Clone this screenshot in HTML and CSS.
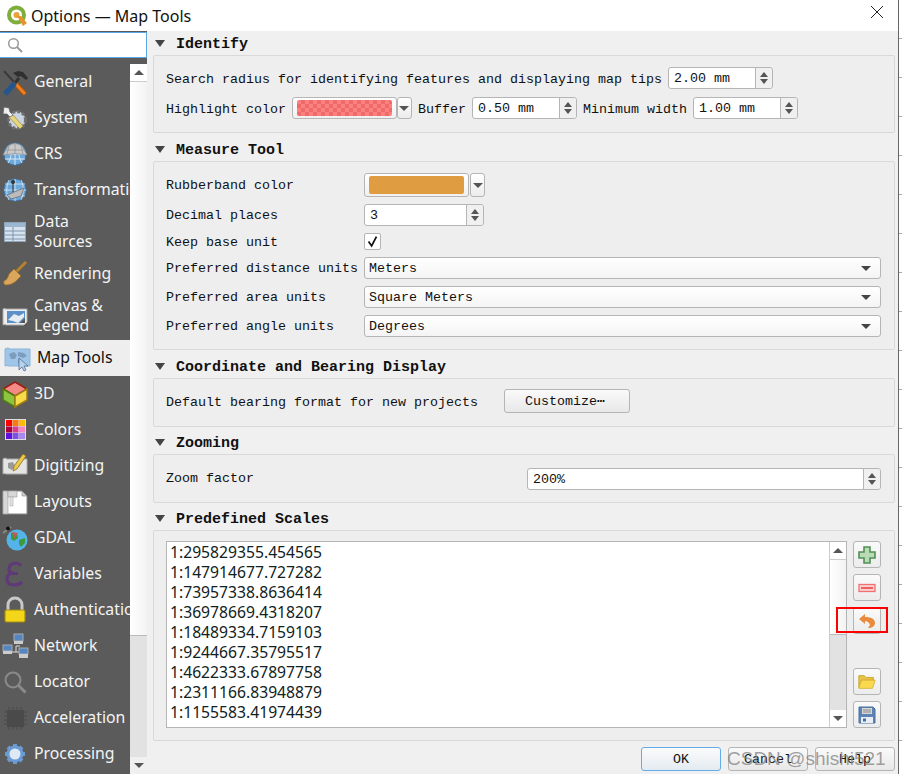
FILE: index.html
```html
<!DOCTYPE html>
<html lang="en">
<head>
<meta charset="utf-8">
<title>Options — Map Tools</title>
<link rel="stylesheet" href="styles.css">
</head>
<body>
<div class="window">
  <header class="titlebar">
    <svg class="logo" viewBox="0 0 22 22"><circle cx="10.500" cy="10" r="7.500" fill="none" stroke="#7fae3c" stroke-width="4"/><circle cx="10.500" cy="10" r="3" fill="#e9a23b"/><path d="M11 11l4 0 6 7-4 3z" fill="#e8932d"/></svg>
    <span class="title">Options — Map Tools</span>
    <svg class="close" viewBox="0 0 14 14"><path d="M1 1l12 12M13 1L1 13" stroke="#222" stroke-width="1" fill="none"/></svg>
  </header>
  <div class="content">
    <aside class="nav">
      <div class="search">
        <svg class="search-icon" viewBox="0 0 16 16"><circle cx="6.500" cy="6.500" r="4.800" fill="none" stroke="#999" stroke-width="1.500"/><path d="M10 10l5 5" stroke="#999" stroke-width="2"/></svg>
      </div>
      <div class="nav-pane">
        <ul class="nav-list">
          <li class="nav-item"><svg class="ico" viewBox="0 0 28 28"><path d="M3 3l10 11" stroke="#3a3a3a" stroke-width="2"/><path d="M13 14l11 12" stroke="#a94f0c" stroke-width="5"/><path d="M13 14l11 12" stroke="#ef7f1f" stroke-width="3"/><path d="M4 26l10-11" stroke="#23558f" stroke-width="5"/><path d="M14 15l4-5" stroke="#333" stroke-width="3"/><path d="M12 5l5-2 5 1 5 6-2 2-5-4-3 1z" fill="#2f2f2f"/></svg><span>General</span></li>
          <li class="nav-item"><svg class="ico" viewBox="0 0 28 28"><circle cx="16" cy="16" r="8.500" fill="#c8d4e0" stroke="#6e6e6e" stroke-width="3" stroke-dasharray="3 2"/><path d="M11 10l11 12-3 3L8 13z" fill="#e8d778" stroke="#8a7a30" stroke-width=".6"/><path d="M3 3l5 1 1 4 3 3-3 2-3-3-4 0z" fill="#eee" stroke="#666" stroke-width=".8"/></svg><span>System</span></li>
          <li class="nav-item"><svg class="ico" viewBox="0 0 28 28"><circle cx="14" cy="14" r="11" fill="#6ea9dc" stroke="#3e78ae"/><path d="M3 14h22M14 3v22M7 6c4 5 4 11 0 17M21 6c-4 5-4 11 0 17M4 19h20" stroke="#d7e8f6" stroke-width="1" fill="none"/><path d="M2 15L7 6q7-5 14 0l5 9q-12-3-24 0z" fill="#c9c9c9" stroke="#8d8d8d" stroke-width=".7"/><path d="M8 6l-2 8M14 4v9M20 6l2 8M5 10h18" stroke="#8d8d8d" stroke-width=".7"/></svg><span>CRS</span></li>
          <li class="nav-item"><svg class="ico" viewBox="0 0 28 28"><circle cx="14" cy="14" r="11" fill="#6ea9dc" stroke="#3e78ae"/><path d="M3 14h22M14 3v22M4 8h20M4 20h20M8 4c-3 6-3 14 0 20M20 4c3 6 3 14 0 20" stroke="#d7e8f6" stroke-width=".8" fill="none"/><path d="M6 19l17-7-3 8-10 3z" fill="#bbb" stroke="#555" stroke-width=".6"/><circle cx="12" cy="6" r="2" fill="#333"/><path d="M12 6v10" stroke="#333" stroke-width="1"/></svg><span>Transformations</span></li>
          <li class="nav-item tall"><svg class="ico" viewBox="0 0 28 28"><rect x="3.500" y="4.500" width="21" height="19" fill="#d6e2ee" stroke="#8fa5bb"/><rect x="4" y="5" width="20" height="4" fill="#9bb6d0"/><path d="M4 13h20M4 17h20M4 21h20M12 9v14" stroke="#7e96ae"/></svg><span>Data<br>Sources</span></li>
          <li class="nav-item"><svg class="ico" viewBox="0 0 28 28"><path d="M25 2L15 12" stroke="#b5812f" stroke-width="3"/><path d="M13 9l7 7-3 3c-4 5-9 6-13 6-1-1-2-3-1-4 3-1 4-4 5-7z" fill="#d9a65b" stroke="#9b6e2a" stroke-width=".8"/></svg><span>Rendering</span></li>
          <li class="nav-item tall"><svg class="ico" viewBox="0 0 28 28"><path d="M2 7q2-1 3 0h21v13l-3 3H5q-1-1-3 0z" fill="#eee" stroke="#aaa"/><rect x="6" y="9" width="18" height="12" fill="#5e90c8"/><path d="M7 18l6-6 5 2 5-3v4l-6 6-5-2z" fill="#e8edf2"/><path d="M19 21l5-5v5z" fill="#555"/></svg><span>Canvas &amp;<br>Legend</span></li>
          <li class="nav-item active"><svg class="ico" viewBox="0 0 28 28"><path d="M2 5q3-2 5 0h20v17H6q-2-1-4 0z" fill="#9fc6e8" stroke="#8ab4d8"/><path d="M6 10l5-2 3 3-2 4-4 0zM15 8l6 1 3 3-4 2-5-2zM15 15l4 1-1 4-3-1z" fill="#7c9dbc"/><path d="M16 14v12l3-3 2 4 2-1-2-4 4 0z" fill="#b9d3ea" stroke="#4e6f92" stroke-width=".8"/></svg><span>Map Tools</span></li>
          <li class="nav-item"><svg class="ico" viewBox="0 0 28 28"><path d="M14 2l12 7-12 7L2 9z" fill="#f58a84" stroke="#9c1c12" stroke-width="1.500"/><path d="M2 9l12 7v11L2 20z" fill="#8cc63e" stroke="#4f7a13" stroke-width="1.500"/><path d="M26 9l-12 7v11l12-7z" fill="#f8dc4c" stroke="#a17c0e" stroke-width="1.500"/></svg><span>3D</span></li>
          <li class="nav-item"><svg class="ico" viewBox="0 0 28 28"><rect x="4" y="3" width="21" height="21" fill="#ddd"/><path d="M5 4h6v6H5z" fill="#f00"/><path d="M11.500 4h6v6h-6z" fill="#f87a10"/><path d="M18 4h6v6h-6z" fill="#fbbc05"/><path d="M5 10.500h6v6H5z" fill="#a8003c"/><path d="M11.500 10.500h6v6h-6z" fill="#d93c8c"/><path d="M18 10.500h6v6h-6z" fill="#f584c4"/><path d="M5 17h6v6H5z" fill="#5f10e0"/><path d="M11.500 17h6v6h-6z" fill="#7d50e8"/><path d="M18 17h6v6h-6z" fill="#ab88f0"/></svg><span>Colors</span></li>
          <li class="nav-item"><svg class="ico" viewBox="0 0 28 28"><path d="M2 7q2-2 4 0h20v15H5q-2-1-3 0z" fill="#e4e4e4" stroke="#aaa"/><path d="M7 11l5-1 2 4-3 4-4-2zM15 10l4 1-1 4-3 0z" fill="#9a9a9a"/><path d="M22 2l3 2-9 13-4 2 1-5z" fill="#ecc94b" stroke="#8a7026" stroke-width=".8"/></svg><span>Digitizing</span></li>
          <li class="nav-item"><svg class="ico" viewBox="0 0 28 28"><path d="M2 3h19l5 5v18H2z" fill="#fff" stroke="#888"/><path d="M2 3h5v23H2z" fill="#d8d8d8" stroke="#999" stroke-width=".6"/><path d="M7 3h9v6H7z" fill="#d8d8d8" stroke="#999" stroke-width=".6"/><path d="M21 3v5h5z" fill="#ccc" stroke="#888" stroke-width=".6"/><path d="M9 9v9h3v-9z" fill="#e4e4e4" stroke="#aaa" stroke-width=".6"/></svg><span>Layouts</span></li>
          <li class="nav-item"><svg class="ico" viewBox="0 0 28 28"><circle cx="16" cy="16" r="10.500" fill="#54b4ea"/><path d="M10 9l6 0 1 5-4 3-3-2zM18 16l6-2 0 5-4 4-2-3z" fill="#3c9a3c"/><path d="M11 8l2 7 4-6z" fill="#c05a5a"/><path d="M2 9L10 3" stroke="#8a8a8a" stroke-width="2"/><circle cx="7" cy="4.500" r="2" fill="#111"/></svg><span>GDAL</span></li>
          <li class="nav-item"><svg class="ico" viewBox="0 0 28 28"><path d="M20 6q-2-3-6-3-6 1-6 6 0 3 3 4-5 1-5 6 0 6 7 6 5 0 8-3M11 13.500h6" fill="none" stroke="#5e3a78" stroke-width="3.200"/></svg><span>Variables</span></li>
          <li class="nav-item"><svg class="ico" viewBox="0 0 28 28"><path d="M7 14V9a7 7 0 0 1 14 0v5" fill="none" stroke="#c8c8c8" stroke-width="3"/><rect x="4" y="14" width="20" height="12" rx="1.500" fill="#f3d61a" stroke="#a58c12" stroke-width="1.200"/></svg><span>Authentication</span></li>
          <li class="nav-item"><svg class="ico" viewBox="0 0 28 28"><path d="M8 20h7M15 20v-6h4M15 20h4" stroke="#ddd" fill="none"/><rect x="13" y="2" width="9" height="7" fill="#5586c0" stroke="#aaa"/><rect x="13" y="9" width="9" height="3" fill="#ccc"/><rect x="2" y="13" width="9" height="6" fill="#5586c0" stroke="#aaa"/><rect x="2" y="19" width="9" height="3" fill="#ccc"/><rect x="18" y="16" width="9" height="6" fill="#5586c0" stroke="#aaa"/><rect x="18" y="22" width="9" height="4" fill="#ccc"/></svg><span>Network</span></li>
          <li class="nav-item"><svg class="ico" viewBox="0 0 28 28"><circle cx="12" cy="12" r="7.500" fill="none" stroke="#8a8a8a" stroke-width="2"/><path d="M17.500 17.500l7 7" stroke="#8a8a8a" stroke-width="3"/></svg><span>Locator</span></li>
          <li class="nav-item"><svg class="ico" viewBox="0 0 28 28"><rect x="6" y="6" width="17" height="17" fill="#4a4a4a"/><path d="M8 3v23M12 3v23M16 3v23M20 3v23M3 8h23M3 12h23M3 16h23M3 20h23" stroke="#4a4a4a" stroke-dasharray="3 17"/></svg><span>Acceleration</span></li>
          <li class="nav-item"><svg class="ico" viewBox="0 0 28 28"><path d="M14 4v20M4 14h20M7 7l14 14M21 7L7 21" stroke="#6b9bd4" stroke-width="4"/><circle cx="14" cy="14" r="7" fill="#dfe9f5" stroke="#6b9bd4" stroke-width="3"/></svg><span>Processing</span></li>
        </ul>
        <div class="scrollbar side">
          <div class="sb-btn"><i class="tri up"></i></div>
          <div class="sb-thumb"></div>
          <div class="sb-btn"><i class="tri down"></i></div>
        </div>
      </div>
    </aside>
    <main class="main">
      <section class="group first">
        <h2 class="group-head"><i class="tri down big"></i><span>Identify</span></h2>
        <div class="box rows">
          <div class="row">
            <span class="lbl">Search radius for identifying features and displaying map tips</span>
            <div class="spin"><span>2.00 mm</span><b class="arrows"><i class="tri up"></i><i class="tri down"></i></b></div>
          </div>
          <div class="row">
            <span class="lbl">Highlight color</span>
            <div class="colorbtn"><span class="swatch checker"></span></div><div class="colordrop"><i class="tri down"></i></div>
            <span class="lbl">Buffer</span>
            <div class="spin"><span>0.50 mm</span><b class="arrows"><i class="tri up"></i><i class="tri down"></i></b></div>
            <span class="lbl">Minimum width</span>
            <div class="spin"><span>1.00 mm</span><b class="arrows"><i class="tri up"></i><i class="tri down"></i></b></div>
          </div>
        </div>
      </section>
      <section class="group">
        <h2 class="group-head"><i class="tri down big"></i><span>Measure Tool</span></h2>
        <div class="box form">
          <span class="lbl">Rubberband color</span>
          <div class="row tight"><div class="colorbtn"><span class="swatch orange"></span></div><div class="colordrop"><i class="tri down"></i></div></div>
          <span class="lbl">Decimal places</span>
          <div class="spin wide"><span>3</span><b class="arrows"><i class="tri up"></i><i class="tri down"></i></b></div>
          <span class="lbl low">Keep base unit</span>
          <div class="check"><svg viewBox="0 0 17 17"><path d="M4 8.500l3.500 5L13 3" fill="none" stroke="#111" stroke-width="2"/></svg></div>
          <span class="lbl">Preferred distance units</span>
          <div class="combo"><span>Meters</span><i class="tri down"></i></div>
          <span class="lbl">Preferred area units</span>
          <div class="combo"><span>Square Meters</span><i class="tri down"></i></div>
          <span class="lbl">Preferred angle units</span>
          <div class="combo"><span>Degrees</span><i class="tri down"></i></div>
        </div>
      </section>
      <section class="group">
        <h2 class="group-head"><i class="tri down big"></i><span>Coordinate and Bearing Display</span></h2>
        <div class="box line coord">
          <span class="lbl">Default bearing format for new projects</span>
          <button class="btn custom">Customize⋯</button>
        </div>
      </section>
      <section class="group next">
        <h2 class="group-head"><i class="tri down big"></i><span>Zooming</span></h2>
        <div class="box line zoom">
          <span class="lbl">Zoom factor</span>
          <div class="spin zoomspin"><span>200%</span><b class="arrows"><i class="tri up"></i><i class="tri down"></i></b></div>
        </div>
      </section>
      <section class="group next">
        <h2 class="group-head"><i class="tri down big"></i><span>Predefined Scales</span></h2>
        <div class="box scales">
          <div class="listbox">
            <ul class="scale-list">
              <li>1:295829355.454565</li>
              <li>1:147914677.727282</li>
              <li>1:73957338.8636414</li>
              <li>1:36978669.4318207</li>
              <li>1:18489334.7159103</li>
              <li>1:9244667.35795517</li>
              <li>1:4622333.67897758</li>
              <li>1:2311166.83948879</li>
              <li>1:1155583.41974439</li>
            </ul>
            <div class="scrollbar list">
              <div class="sb-btn"><i class="tri up"></i></div>
              <div class="sb-thumb"></div>
              <div class="sb-btn"><i class="tri down"></i></div>
            </div>
          </div>
          <div class="tools">
            <button class="tool"><svg viewBox="0 0 20 20"><path d="M7 2h6v5h5v6h-5v5H7v-5H2V7h5z" fill="#b9dcb4" stroke="#4f8f56" stroke-width="1.600"/></svg></button>
            <button class="tool"><svg viewBox="0 0 20 20"><rect x="2" y="6.500" width="16" height="7" fill="#fbd0d0" stroke="#ee7070" stroke-width="1.300"/><rect x="4" y="9" width="12" height="2" fill="#ee6060"/></svg></button>
            <button class="tool"><svg viewBox="0 0 20 20"><path d="M2 8l6-5v3c6 0 10 2 10 6 0 3-3 5-7 5l2-3c-1-3-3-4-5-4v3z" fill="#e98a3c"/></svg></button>
            <span class="tool-gap"></span>
            <button class="tool"><svg viewBox="0 0 22 20"><path d="M2 3h6l2 2h8v3H5L2 16z" fill="#e8c445" stroke="#c7a52c"/><path d="M5 8h15l-3 9H2z" fill="#fbd94e" stroke="#d8b53a"/></svg></button>
            <button class="tool"><svg viewBox="0 0 20 20"><path d="M2 2h14l2 2v14H2z" fill="#5b83b5" stroke="#48709f"/><rect x="5" y="3" width="10" height="6" fill="#d8d8d8"/><path d="M6 5h8M6 7h8" stroke="#888"/><rect x="4" y="12" width="12" height="6" fill="#e9eef4"/><rect x="6" y="13.500" width="3" height="3" fill="#48709f"/></svg></button>
          </div>
        </div>
      </section>
      <footer class="actions">
        <button class="btn default">OK</button>
        <button class="btn">Cancel</button>
        <button class="btn">Help</button>
      </footer>
    </main>
  </div>
</div>
<div class="redmark"></div>
<div class="watermark">CSDN @shishi521</div>
</body>
</html>
```
FILE: styles.css
```css
* { box-sizing: border-box; }
html, body { margin: 0; padding: 0; height: 774px; overflow: hidden; }
body {
  position: relative;
  width: 902px;
  background: repeating-linear-gradient(#fff 0 38px, #a8a8a8 38px 39px);
  font-family: "Liberation Mono", monospace;
  font-size: 13.33px;
  color: #111;
}
.window { width: 899px; height: 774px; display: flex; flex-direction: column; background: #f0f0f0; border-right: 1px solid #666; }
.titlebar { height: 31px; flex: none; display: flex; align-items: center; background: #fff; padding-left: 6px; }
.logo { width: 22px; height: 22px; margin-right: 3px; }
.title { font: 16px "Noto Sans", sans-serif; color: #111; }
.close { width: 14px; height: 14px; margin-left: auto; margin-right: 14px; margin-top: -7px; }
.content { flex: 1; display: flex; min-height: 0; }
.nav { width: 147px; flex: none; display: flex; flex-direction: column; background: #5b5b5b; }
.search { height: 26px; margin-top: 1px; background: #fff; border: 1px solid #5aa9e6; border-left: 0; display: flex; align-items: center; padding-left: 7px; flex: none; }
.search-icon { width: 16px; height: 16px; }
.nav-pane { flex: 1; display: flex; min-height: 0; padding-top: 6px; }
.nav-list { list-style: none; margin: 0; padding: 0; width: 130px; flex: none; overflow: hidden; }
.nav-item { height: 36px; display: flex; align-items: center; padding-left: 1px; font: 15.8px/20px "Noto Sans", sans-serif; color: #f4f4f4; white-space: nowrap; }
.nav-item.tall { height: 48px; }
.nav-item span { margin-left: 5px; padding-bottom: 2px; }
.nav-item.active { background: #eeeeee; color: #111; padding-left: 3px; }
.nav-item.active span { margin-left: 6px; }
.ico { width: 28px; height: 28px; flex: none; }
.scrollbar { width: 17px; display: flex; flex-direction: column; background: #e2e2e2; }
.sb-btn { height: 17px; flex: none; display: flex; align-items: center; justify-content: center; background: #fff; }
.sb-thumb { background: linear-gradient(90deg, #fff, #f3f3f3); border-bottom: 1px solid #bbb; border-top: 1px solid #ccc; }
.side .sb-thumb { height: 555px; }
.side .sb-btn:last-child { margin-top: auto; background: #f0f0f0; }
.list .sb-thumb { height: 76px; }
.list .sb-btn:last-child { margin-top: auto; }
.tri { display: block; width: 0; height: 0; border-left: 5px solid transparent; border-right: 5px solid transparent; }
.tri.up { border-bottom: 5px solid #555; }
.tri.down { border-top: 5px solid #555; }
.tri.big { border-left-width: 5.500px; border-right-width: 5.500px; border-top-width: 7px; border-top-color: #444; }
.main { flex: 1; display: flex; flex-direction: column; padding: 0 3px 0 6px; min-width: 0; }
.group { margin-top: 4px; }
.group.first { margin-top: 0; }
.group.next { margin-top: 3px; }
.group-head { height: 24px; margin: 0; padding: 2px 0 0 2px; display: flex; align-items: center; font: bold 15px "Liberation Mono", monospace; color: #111; }
.group-head span { margin-left: 11px; }
.group-head .tri { margin-top: -2px; }
.box { background: #eeeeee; border: 1px solid #d9d9d9; border-radius: 2px; padding-left: 12px; }
.rows { height: 78px; padding-top: 11px; display: flex; flex-direction: column; gap: 8px; }
.rows .lbl { padding-top: 2px; }
.lbl.low { padding-top: 2px; }
.row { display: flex; align-items: center; height: 22px; gap: 6px; }
.row.tight { gap: 0; height: 24px; }
.lbl { white-space: nowrap; }
.spin { width: 105px; height: 22px; display: flex; justify-content: space-between; background: #fff; border: 1px solid #b5b5b5; border-radius: 3px; padding-left: 5px; line-height: 22px; }
.spin.wide { width: 120px; }
.arrows { width: 17px; flex: none; display: flex; flex-direction: column; align-items: center; justify-content: center; gap: 2px; background: #f0f0f0; border-left: 1px solid #b5b5b5; border-radius: 0 3px 3px 0; }
.arrows .tri { border-left-width: 4.500px; border-right-width: 4.500px; }
.colorbtn { width: 105px; height: 100%; background: linear-gradient(#fff, #f0f0f0); border: 1px solid #b5b5b5; border-radius: 3px; padding: 2px 4px; }
.swatch { display: block; height: 100%; border-radius: 2px; }
.checker { background: repeating-conic-gradient(#f06a6a 0 25%, #fb8080 0 50%) 0 0 / 8px 8px; }
.orange { background: #e09c40; }
.colordrop { width: 15px; height: 100%; margin-left: 0; display: flex; align-items: center; justify-content: center; background: linear-gradient(#fff, #ececec); border: 1px solid #b5b5b5; border-radius: 3px; }
.row .colordrop { margin-left: -6px; }
.row.tight .colordrop { margin-left: 1px; }
.form { height: 189px; padding-top: 11px; display: grid; grid-template-columns: 198px 517px; grid-template-rows: 24px 22px 17px 22px 22px 22px; row-gap: 7px; align-items: center; }
.check { width: 17px; height: 17px; background: #fff; border: 1px solid #b5b5b5; border-radius: 2px; }
.check svg { display: block; width: 15px; height: 15px; }
.combo { height: 22px; display: flex; align-items: center; justify-content: space-between; padding: 0 9px 0 4px; background: linear-gradient(#fff, #f4f4f4); border: 1px solid #b5b5b5; border-radius: 3px; }
.combo .tri { border-top-color: #444; }
.line { height: 49px; display: flex; align-items: center; justify-content: space-between; padding-right: 13px; }
.coord { justify-content: flex-start; gap: 26px; }
.zoomspin { width: 354px; }
.btn { width: 80px; height: 24px; padding: 2px 0 0; font: 13.33px/18px "Liberation Mono", "DejaVu Sans Mono", monospace; color: #111; background: linear-gradient(#fafafa, #e8e8e8); border: 1px solid #b5b5b5; border-radius: 3px; }
.custom { width: 126px; margin-bottom: 3px; padding-right: 4px; }
.default { border-color: #62ade9; background: linear-gradient(#fbfbfb, #e4ebf1); }
.scales { height: 211px; padding: 10px 13px 0 12px; display: flex; gap: 6px; }
.listbox { width: 681px; height: 187px; display: flex; justify-content: space-between; background: #fff; border: 1px solid #b5b5b5; }
.scale-list { list-style: none; margin: 0; padding: 0 0 0 3px; font: 15.7px/20px "Noto Sans", sans-serif; color: #122; }
.listbox .scrollbar { border-left: 1px solid #ccc; }
.tools { flex: 1; display: flex; flex-direction: column; gap: 6px; }
.tool { width: 28px; height: 27px; padding: 0; display: flex; align-items: center; justify-content: center; background: linear-gradient(#fafafa, #ececec); border: 1px solid #b5b5b5; border-radius: 3px; }
.tool svg { width: 20px; height: 20px; }
.tool-gap { height: 22px; flex: none; }
.actions { display: flex; justify-content: flex-end; gap: 7px; padding-top: 6px; }
.redmark { position: absolute; left: 836px; top: 607px; width: 52px; height: 26px; border: 2px solid #f00; }
.watermark { position: absolute; left: 727px; top: 746px; font: 19px/26px "Liberation Sans", sans-serif; color: rgba(130,130,130,.75); white-space: nowrap; }
```
